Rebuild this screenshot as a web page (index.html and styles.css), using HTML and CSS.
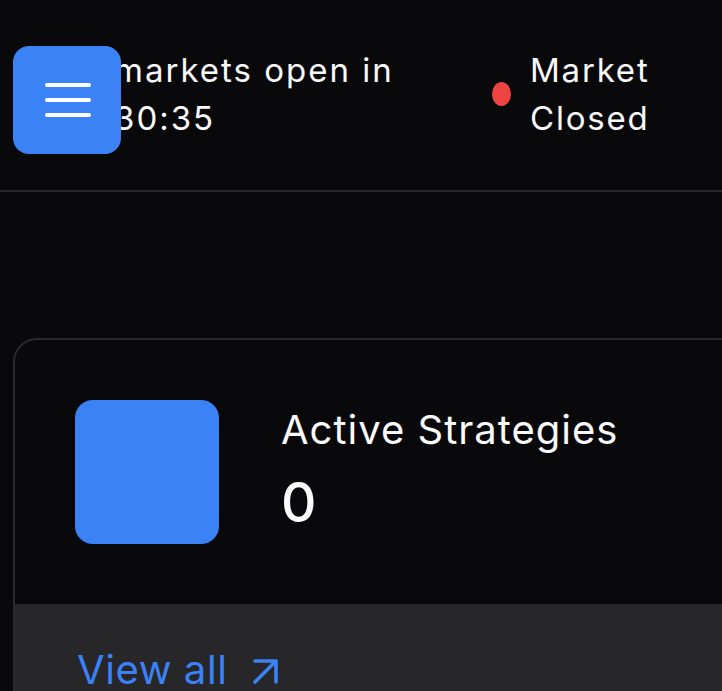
FILE: index.html
```html
<!DOCTYPE html>
<html lang="en">
<head>
<meta charset="utf-8">
<title>Dashboard</title>
<link rel="stylesheet" href="styles.css">
</head>
<body>
<button class="menu-btn" aria-label="Menu">
  <svg width="48" height="48" viewBox="0 0 48 48" fill="none" stroke="#fff" stroke-width="4" stroke-linecap="round">
    <path d="M4 9H46M4 24H46M4 39H46"/>
  </svg>
</button>
<header class="topbar">
  <div class="countdown">markets open in 30:35</div>
  <div class="status">
    <span class="dot"></span>
    <span class="status-text">Market Closed</span>
  </div>
</header>
<main class="content">
  <section class="card">
    <div class="card-body">
      <div class="icon-box"></div>
      <div class="stat">
        <div class="stat-label">Active Strategies</div>
        <div class="stat-value">0</div>
      </div>
    </div>
    <div class="card-footer">
      <a class="view-all" href="#">View all
        <svg class="arrow" width="25" height="25" viewBox="0 0 25 25" fill="none" stroke="currentColor" stroke-width="3.6" stroke-linecap="round" stroke-linejoin="round">
          <path d="M2 23L23 2M2 2H23V23"/>
        </svg>
      </a>
    </div>
  </section>
</main>
</body>
</html>
```
FILE: styles.css
```css
* { box-sizing: border-box; }
html, body { margin: 0; padding: 0; }
body {
  background: #09090b;
  color: #fafafa;
  font-family: Inter, "Noto Sans", sans-serif;
  overflow: hidden;
  width: 722px;
  height: 691px;
}
.menu-btn {
  position: fixed;
  left: 13px;
  top: 46px;
  width: 108px;
  height: 108px;
  border: 0;
  border-radius: 16px;
  background: #3b82f6;
  display: flex;
  align-items: center;
  justify-content: center;
  padding: 0;
  z-index: 10;
}
.topbar {
  height: 192px;
  border-bottom: 2px solid #27272a;
  display: flex;
  align-items: center;
  padding-left: 114px;
  padding-bottom: 2px;
}
.countdown {
  width: 290px;
  font-size: 33px;
  line-height: 48px;
  letter-spacing: 2px;
}
.status {
  margin-left: 88px;
  display: flex;
  align-items: center;
  gap: 19px;
}
.dot {
  width: 19px;
  height: 24px;
  border-radius: 50%;
  background: #ef4444;
}
.status-text {
  width: 140px;
  font-size: 33px;
  line-height: 48px;
  letter-spacing: 1.8px;
}
.content {
  padding: 146px 0 0 13px;
}
.card {
  width: 800px;
  border: 2px solid #2a2a2d;
  border-radius: 24px;
  overflow: hidden;
  background: #09090b;
}
.card-body {
  display: flex;
  align-items: flex-start;
  padding: 60px;
}
.icon-box {
  width: 144px;
  height: 144px;
  border-radius: 18px;
  background: #3b82f6;
  flex-shrink: 0;
}
.stat {
  margin-left: 62px;
  padding-top: 2px;
}
.stat-label {
  font-size: 40px;
  line-height: 56px;
  letter-spacing: 1px;
}
.stat-value {
  margin-top: 8px;
  font-size: 55px;
  line-height: 72px;
  font-weight: 500;
}
.card-footer {
  background: #27272a;
  padding: 38px 62px;
  height: 200px;
}
.view-all {
  color: #3b82f6;
  text-decoration: none;
  font-size: 40px;
  line-height: 56px;
  letter-spacing: 0.6px;
  display: inline-flex;
  align-items: center;
  gap: 25px;
}
.arrow { margin-top: 2px; }
```
